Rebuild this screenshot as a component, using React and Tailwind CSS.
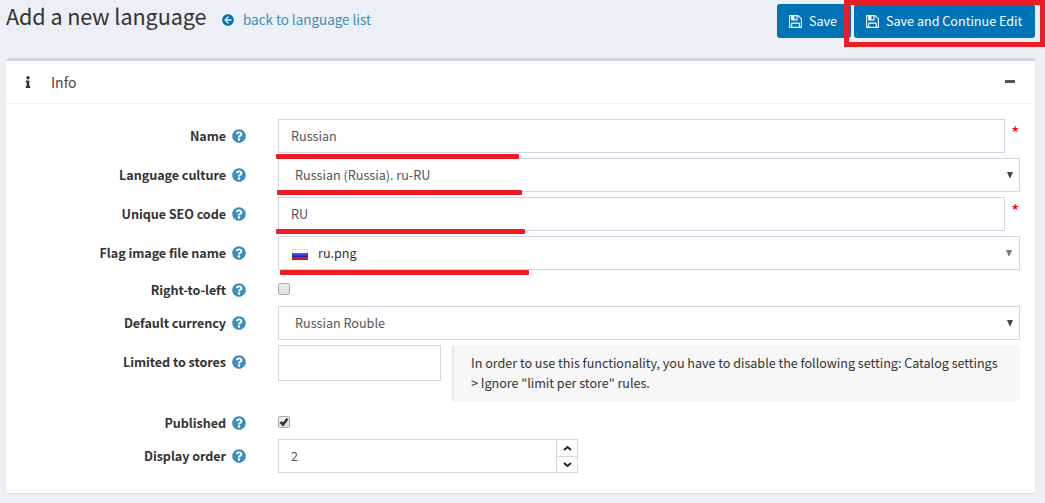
import React from "react";
import { FaInfo, FaQuestionCircle, FaArrowCircleLeft } from "react-icons/fa";

function Floppy() {
  return (
    <svg viewBox="0 0 1536 1792" className="h-[15px] w-[13px] shrink-0" fill="currentColor">
      <path d="M384 1536h768v-384h-768v384zm896 0h128v-896q0-14-10-38.5t-20-34.5l-281-281q-10-10-34-20t-39-10v416q0 40-28 68t-68 28h-576q-40 0-68-28t-28-68v-416h-128v1280h128v-416q0-40 28-68t68-28h832q40 0 68 28t28 68v416zm-384-928v-320q0-13-9.5-22.5t-22.5-9.5h-192q-13 0-22.5 9.5t-9.5 22.5v320q0 13 9.5 22.5t22.5 9.5h192q13 0 22.5-9.5t9.5-22.5zm640 32v928q0 40-28 68t-68 28h-1344q-40 0-68-28t-28-68v-1344q0-40 28-68t68-28h928q40 0 88 20t76 48l280 280q28 28 48 76t20 88z" />
    </svg>
  );
}

function Row({ label, className = "mb-[5px] h-[34px]", labelClass = "h-[34px]", children }) {
  return (
    <div className={"flex " + className}>
      <div className={"mr-8 flex w-[240px] shrink-0 items-center justify-end gap-1.5 font-bold tracking-[-0.06px] text-[#333] " + labelClass}>
        <span>{label}</span>
        <FaQuestionCircle className="size-[14px] text-[#3c8dbc]" />
      </div>
      {children}
    </div>
  );
}

function Arrow({ className }) {
  return (
    <svg viewBox="0 0 6 6" className={"h-[6px] w-[6px] " + className} fill="currentColor">
      <path d="M0 0h6L3.4 6h-.8z" />
    </svg>
  );
}

function Select({ children, arrow = "mr-[6px] text-[#444]", className = "pl-[16px] text-[#555]" }) {
  return (
    <div className={"flex h-[34px] w-[742px] items-center justify-between border border-[#d2d6de] " + className}>
      {children}
      <Arrow className={arrow} />
    </div>
  );
}

function Required({ children }) {
  return (
    <>
      <div className="flex h-[34px] w-[727px] items-center border border-[#d2d6de] pl-3 text-[#555]">{children}</div>
      <span className="ml-[6px] mt-[3px] text-[18px] leading-5 text-[#f00]">*</span>
    </>
  );
}

function Chevron({ down }) {
  return (
    <svg viewBox="0 0 9 6" className="h-[6px] w-[9px]" fill="none" stroke="#222" strokeWidth="2">
      <path d={down ? "M1 1l3.5 3L8 1" : "M1 5l3.5-3L8 5"} />
    </svg>
  );
}

const button = "flex h-[34px] items-center rounded-[3px] bg-[#0073b7] text-white";

export default function App() {
  return (
    <div className="relative h-[503px] w-[1045px] overflow-hidden bg-[#ecf0f5] pl-1.5 pr-2.5 font-['Noto_Sans_CJK_SC','Source_Sans_Pro',sans-serif] text-[12.6px] leading-5 text-[#333]">
      <header className="flex h-[58px] items-start">
        <h1 className="mt-[2px] w-[216px] whitespace-nowrap text-[21.6px] leading-7 tracking-[-0.08px]">Add a new language</h1>
        <FaArrowCircleLeft className="mt-[14px] size-[12px] text-[#0073b7]" />
        <a className="ml-[9px] mt-[9px] whitespace-nowrap text-[13.5px] tracking-[-0.04px] text-[#3c8dbc]">back to language list</a>
        <button className={button + " ml-auto mt-1 w-[74px] gap-[7px] pl-3"}>
          <Floppy />
          <span>Save</span>
        </button>
        <button className={button + " ml-[3px] mt-1 w-[181px] gap-[7px] whitespace-nowrap pl-3"}>
          <Floppy />
          <span>Save and Continue Edit</span>
        </button>
      </header>
      <main className="h-[435px] rounded-[3px] border-t-[3px] border-[#d2d6de] bg-white shadow-[0_1px_1px_rgba(0,0,0,0.1)]">
        <div className="flex h-[43px] items-center border-b border-[#f4f4f4] pl-[16px] pr-5">
          <FaInfo className="h-[12px] w-[12px] text-[#333]" />
          <span className="ml-[17px] text-[14px] text-[#444]">Info</span>
          <span className="mb-[2px] ml-auto h-[3px] w-[10px] bg-[#555]" />
        </div>
        <div className="pt-[15px]">
          <Row label="Name">
            <Required>Russian</Required>
          </Row>
          <Row label="Language culture">
            <Select><span>Russian (Russia). ru-RU</span></Select>
          </Row>
          <Row label="Unique SEO code">
            <Required>RU</Required>
          </Row>
          <Row label="Flag image file name">
            <Select arrow="mr-[7px] text-[#777]" className="pl-[13px] text-[#333]">
              <span className="flex items-center">
                <span className="mr-2.5 mt-[3px] flex h-[11px] w-4 flex-col">
                  <span className="h-[4px] border border-b-0 border-[#ddd] bg-white" />
                  <span className="h-[4px] bg-gradient-to-b from-[#5a5cf8] to-[#1210c8]" />
                  <span className="h-[3px] bg-gradient-to-b from-[#f01818] to-[#c81010]" />
                </span>
                ru.png
              </span>
            </Select>
          </Row>
          <Row label="Right-to-left" className="h-[31px]" labelClass="h-[30px]">
            <span className="mt-[8px] h-3 w-3 rounded-[2px] border border-[#aaa] bg-gradient-to-b from-[#eee] to-[#ddd]" />
          </Row>
          <Row label="Default currency">
            <Select><span>Russian Rouble</span></Select>
          </Row>
          <Row label="Limited to stores" className="h-[61px]">
            <div className="h-[36px] w-[163px] border border-[#d2d6de]" />
            <div className="ml-2.5 h-[56px] w-[569px] whitespace-nowrap rounded-[3px] border-l-4 border-[#eee] bg-[#f7f7f7] pl-4 pt-2 tracking-[-0.02px]">
              In order to use this functionality, you have to disable the following setting: Catalog settings
              <br />
              &gt; Ignore "limit per store" rules.
            </div>
          </Row>
          <Row label="Published" className="h-[33px]" labelClass="h-[33px]">
            <span className="mt-[10px] h-3 w-3 rounded-[2px] border border-[#aaa] bg-gradient-to-b from-[#eee] to-[#ddd]">
              <svg viewBox="0 0 10 10" className="size-[10px]" fill="none" stroke="#333" strokeWidth="2.5">
                <path d="M1.5 5L4 7.5 8.5 1.8" />
              </svg>
            </span>
          </Row>
          <Row label="Display order">
            <div className="flex h-[34px] w-[300px] border border-[#d2d6de]">
              <span className="flex flex-1 items-center pl-3 text-[#555]">2</span>
              <span className="flex w-[21px] flex-col border-l border-[#d2d6de]">
                <span className="flex h-[17px] items-center justify-center border-b border-[#d2d6de]"><Chevron /></span>
                <span className="flex h-[15px] items-center justify-center"><Chevron down /></span>
              </span>
            </div>
          </Row>
        </div>
      </main>
      <div className="absolute left-[844px] top-0 h-[47px] w-[201px] border-[5px] border-[#ed1c24]" />
      <div className="absolute left-[276px] top-[154px] h-[5px] w-[243px] rounded-[1px] bg-[#ed1c24]" />
      <div className="absolute left-[277px] top-[190px] h-[5px] w-[245px] rounded-[1px] bg-[#ed1c24]" />
      <div className="absolute left-[276px] top-[229px] h-[5px] w-[249px] rounded-[1px] bg-[#ed1c24]" />
      <div className="absolute left-[280px] top-[270px] h-[5px] w-[249px] rounded-[1px] bg-[#ed1c24]" />
    </div>
  );
}
